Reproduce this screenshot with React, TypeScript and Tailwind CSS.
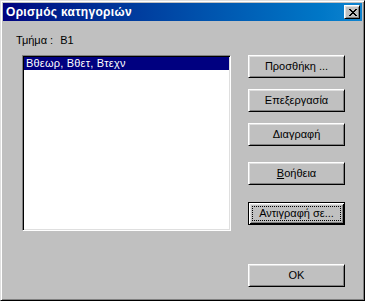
import React from 'react'

const raised =
  'border border-t-white border-l-white border-r-black border-b-black shadow-[inset_1px_1px_#dfdfdf,inset_-1px_-1px_#808080]'

function CloseGlyph() {
  // 8x7 pixel cross, drawn like the classic caption button glyph
  const rows = ['11000011', '01100110', '00111100', '00011000', '00111100', '01100110', '11000011']
  return (
    <svg width="8" height="7" viewBox="0 0 8 7" shapeRendering="crispEdges">
      {rows.map((row, y) =>
        row.split('').map((c, x) => (c === '1' ? <rect key={`${x}-${y}`} x={x} y={y} width="1" height="1" fill="#000" /> : null))
      )}
    </svg>
  )
}

function DialogButton({ children, className = '', isDefault = false }: { children: React.ReactNode; className?: string; isDefault?: boolean }) {
  if (isDefault) {
    return (
      <button className={`h-[23px] w-[97px] bg-[#c0c0c0] border border-black shadow-[inset_1px_1px_#fff,inset_-1px_-1px_#000,inset_2px_2px_#dfdfdf,inset_-2px_-2px_#808080] p-[3px] flex ${className}`}>
        <span className="flex-1 h-full flex items-center justify-center border border-dotted border-black text-[11px] leading-[13px] text-black">
          {children}
        </span>
      </button>
    )
  }
  return (
    <button className={`h-[23px] w-[97px] bg-[#c0c0c0] ${raised} flex items-center justify-center text-[11px] leading-[13px] text-black ${className}`}>
      {children}
    </button>
  )
}

export default function App() {
  return (
    <div className="w-[365px] h-[301px] bg-[#c0c0c0] font-['Liberation_Sans',Arial,sans-serif] text-black">
      <div className="w-full h-full border border-t-[#dfdfdf] border-l-[#dfdfdf] border-r-black border-b-black shadow-[inset_1px_1px_#fff,inset_-1px_-1px_#808080] p-[2px] flex flex-col">
        {/* title bar */}
        <div className="h-[18px] flex items-center justify-between pl-[3px] pr-[2px] bg-linear-to-r from-[#000080] to-[#1084d0]">
          <span className="text-white font-bold text-[12px] tracking-[0.3px] leading-[14px]">Ορισμός κατηγοριών</span>
          <button className={`w-[16px] h-[14px] bg-[#c0c0c0] ${raised} flex items-center justify-center pl-[1px]`}>
            <CloseGlyph />
          </button>
        </div>

        <div className="flex flex-1">
          <div className="w-[228px] pl-[13px] flex flex-col">
            <div className="mt-[13px] flex text-[11px] leading-[13px]">
              <span>Τμήμα :</span>
              <span className="ml-[7px]">B1</span>
            </div>
            <div className="mt-[8px] ml-[6px] w-[209px] h-[176px] bg-white border border-t-[#808080] border-l-[#808080] border-r-white border-b-white shadow-[inset_1px_1px_#000,inset_-1px_-1px_#dfdfdf] p-[1px]">
              <div className="h-[13px] bg-[#000080] text-white text-[11px] tracking-[0.2px] leading-[13px] pl-[2px]">Βθεωρ, Βθετ, Βτεχν</div>
            </div>
          </div>

          <div className="ml-[17px] pt-[34px] flex flex-col">
            <DialogButton>Προσθήκη ...</DialogButton>
            <DialogButton className="mt-[11px]">Επεξεργασία</DialogButton>
            <DialogButton className="mt-[11px]">Διαγραφή</DialogButton>
            <DialogButton className="mt-[16px]">
              <span>
                <span className="underline">Β</span>οήθεια
              </span>
            </DialogButton>
            <DialogButton className="mt-[17px]" isDefault>
              Αντιγραφή σε...
            </DialogButton>
            <DialogButton className="mt-[39px]">OK</DialogButton>
          </div>
        </div>
      </div>
    </div>
  )
}
